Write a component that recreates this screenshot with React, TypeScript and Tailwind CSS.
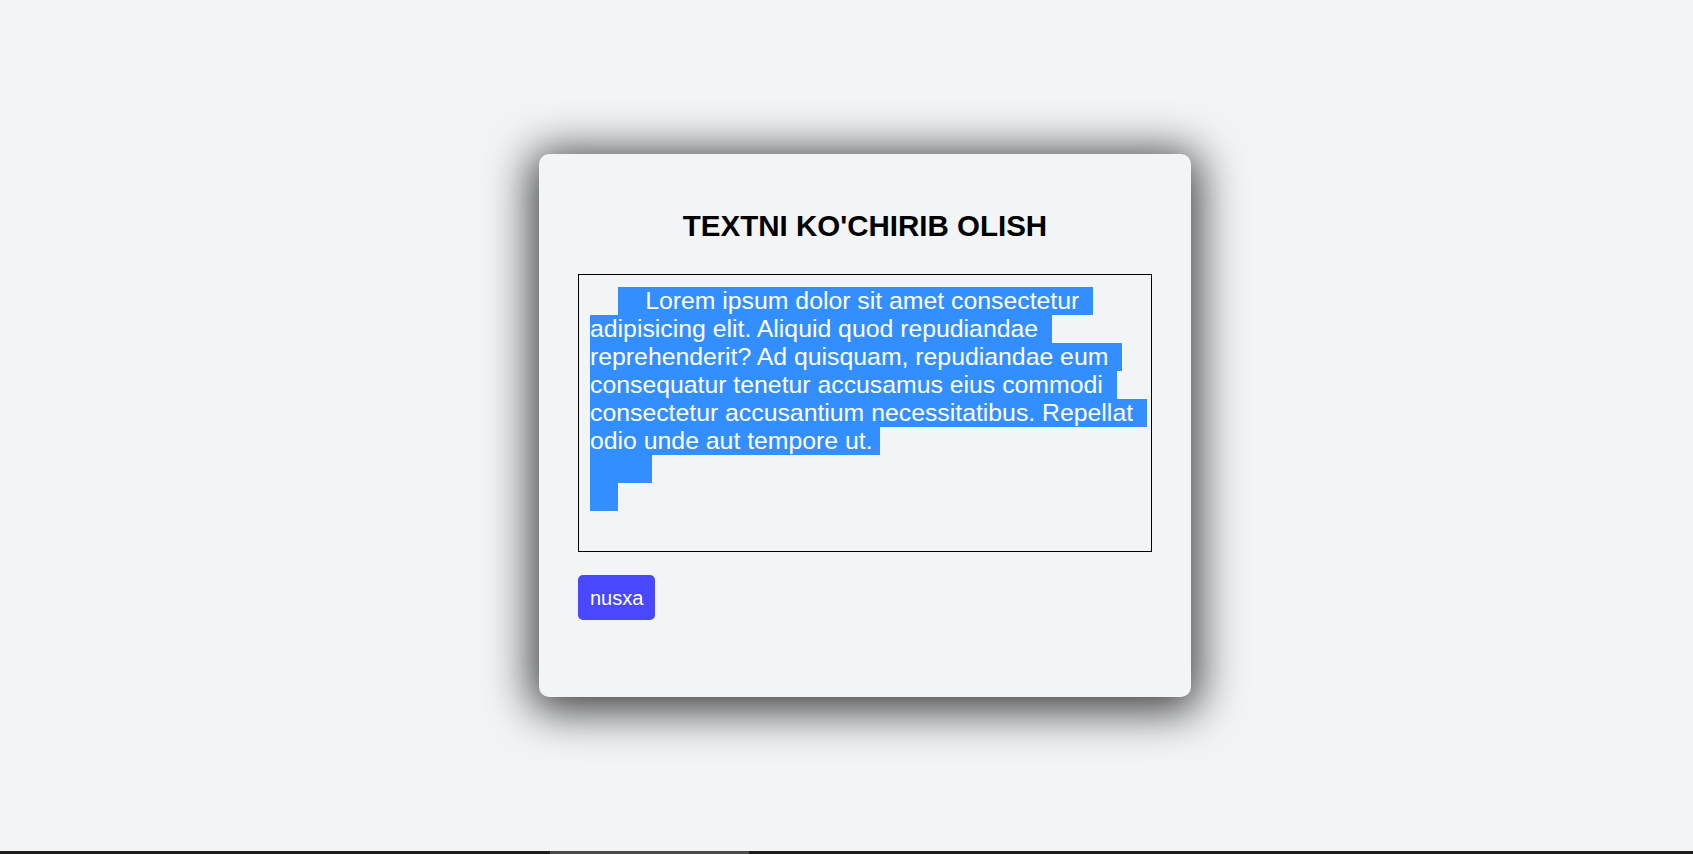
import { useEffect, useRef } from "react";

const text =
  "        Lorem ipsum dolor sit amet consectetur adipisicing elit. Aliquid quod repudiandae reprehenderit? Ad quisquam, repudiandae eum consequatur tenetur accusamus eius commodi consectetur accusantium necessitatibus. Repellat odio unde aut tempore ut.\n        \n    ";

const App = () => {
  const areaRef = useRef<HTMLTextAreaElement>(null);

  useEffect(() => {
    const el = areaRef.current;
    if (!el) return;
    el.focus();
    el.setSelectionRange(4, text.length);
  }, []);

  const handleCopy = () => {
    const el = areaRef.current;
    if (!el) return;
    el.select();
    navigator.clipboard?.writeText(el.value).catch(() => {});
  };

  return (
    <div className="flex h-[854px] flex-col overflow-hidden bg-[#f3f4f6] font-['Liberation_Sans',Arial,sans-serif]">
      <div className="flex-1 pl-[539px] pt-[154px]">
        <div className="flex h-[543px] w-[652px] flex-col rounded-[10px] bg-[#f3f4f6] px-[39px] pt-[55px] shadow-[0_6px_45px_8px_rgba(0,0,0,0.75)]">
          <h1 className="text-center text-[29.5px] font-bold leading-[34px] text-black">
            TEXTNI KO'CHIRIB OLISH
          </h1>
          <textarea
            ref={areaRef}
            defaultValue={text}
            spellCheck={false}
            className="mt-[31px] h-[278px] w-full resize-none border border-black bg-transparent pb-3 pl-[11px] pr-2 pt-3 text-[24.8px] leading-[28px] text-[#222] outline-none selection:bg-[#338fff] selection:text-white focus:outline-none"
          />
          <div className="mt-[23px] flex">
            <button
              onClick={handleCopy}
              className="h-[45px] rounded-[5px] bg-[#4a48ff] px-3 text-[20px] text-white"
            >
              nusxa
            </button>
          </div>
        </div>
      </div>
      <div className="flex h-[3px] bg-[#1e1e1e]">
        <div className="ml-[550px] w-[199px] bg-[#4a4a4a]" />
      </div>
    </div>
  );
};

export default App;
